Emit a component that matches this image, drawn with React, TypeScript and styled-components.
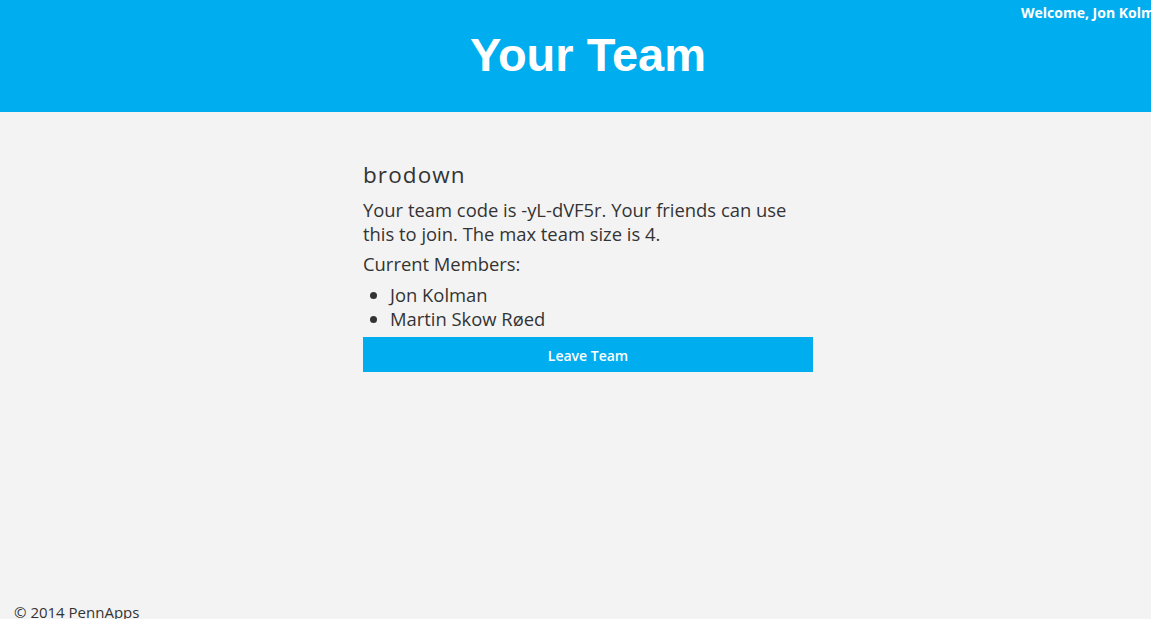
import React from "react";
import styled, { createGlobalStyle } from "styled-components";

const Global = createGlobalStyle`
  html, body { margin: 0; padding: 0; overflow: hidden; }
  body { background: #f3f3f3; font-family: "Open Sans", "Liberation Sans", sans-serif; color: #333; }
`;

const Page = styled.div`
  position: relative;
  width: 1176px;
  height: 619px;
  display: flex;
  flex-direction: column;
`;

const Header = styled.header`
  position: relative;
  height: 112px;
  box-sizing: border-box;
  padding-bottom: 4px;
  background: #00aeef;
  display: flex;
  align-items: center;
  justify-content: center;
`;

const Title = styled.h1`
  margin: 0;
  font-family: "Liberation Sans", Arial, sans-serif;
  font-weight: 700;
  font-size: 47px;
  color: #fff;
  line-height: 1;
`;

const Welcome = styled.div`
  position: absolute;
  top: 3px;
  left: 1021px;
  white-space: nowrap;
  font-size: 14px;
  font-weight: 700;
  color: #fff;
`;

const Main = styled.main`
  flex: 1;
  width: 450px;
  margin: 0 auto;
  padding-top: 48px;
`;

const TeamName = styled.h2`
  margin: 0 0 8px;
  font-size: 22.5px;
  font-weight: 400;
  letter-spacing: 1.1px;
  line-height: 30px;
`;

const Text = styled.p`
  margin: 0 0 6px;
  font-size: 18.4px;
  line-height: 24px;
`;

const Members = styled.ul`
  margin: 0;
  padding-left: 27px;
  padding-top: 1px;
  font-size: 18.4px;
  line-height: 24px;
`;

const LeaveButton = styled.button`
  display: block;
  width: 450px;
  height: 35px;
  margin-top: 6px;
  padding-top: 2px;
  border: none;
  background: #00aeef;
  color: #fff;
  font-family: "Open Sans", sans-serif;
  font-weight: 600;
  font-size: 14px;
  cursor: pointer;
`;

const Footer = styled.footer`
  padding-left: 14px;
  font-size: 15px;
  height: 17px;
  line-height: 20px;
`;

export default function App() {
  return (
    <Page>
      <Global />
      <Header>
        <Title>Your Team</Title>
        <Welcome>Welcome, Jon Kolman</Welcome>
      </Header>
      <Main>
        <TeamName>brodown</TeamName>
        <Text>
          Your team code is -yL-dVF5r. Your friends can use this to join. The max team size is 4.
        </Text>
        <Text>Current Members:</Text>
        <Members>
          <li>Jon Kolman</li>
          <li>Martin Skow Røed</li>
        </Members>
        <LeaveButton>Leave Team</LeaveButton>
      </Main>
      <Footer>© 2014 PennApps</Footer>
    </Page>
  );
}
